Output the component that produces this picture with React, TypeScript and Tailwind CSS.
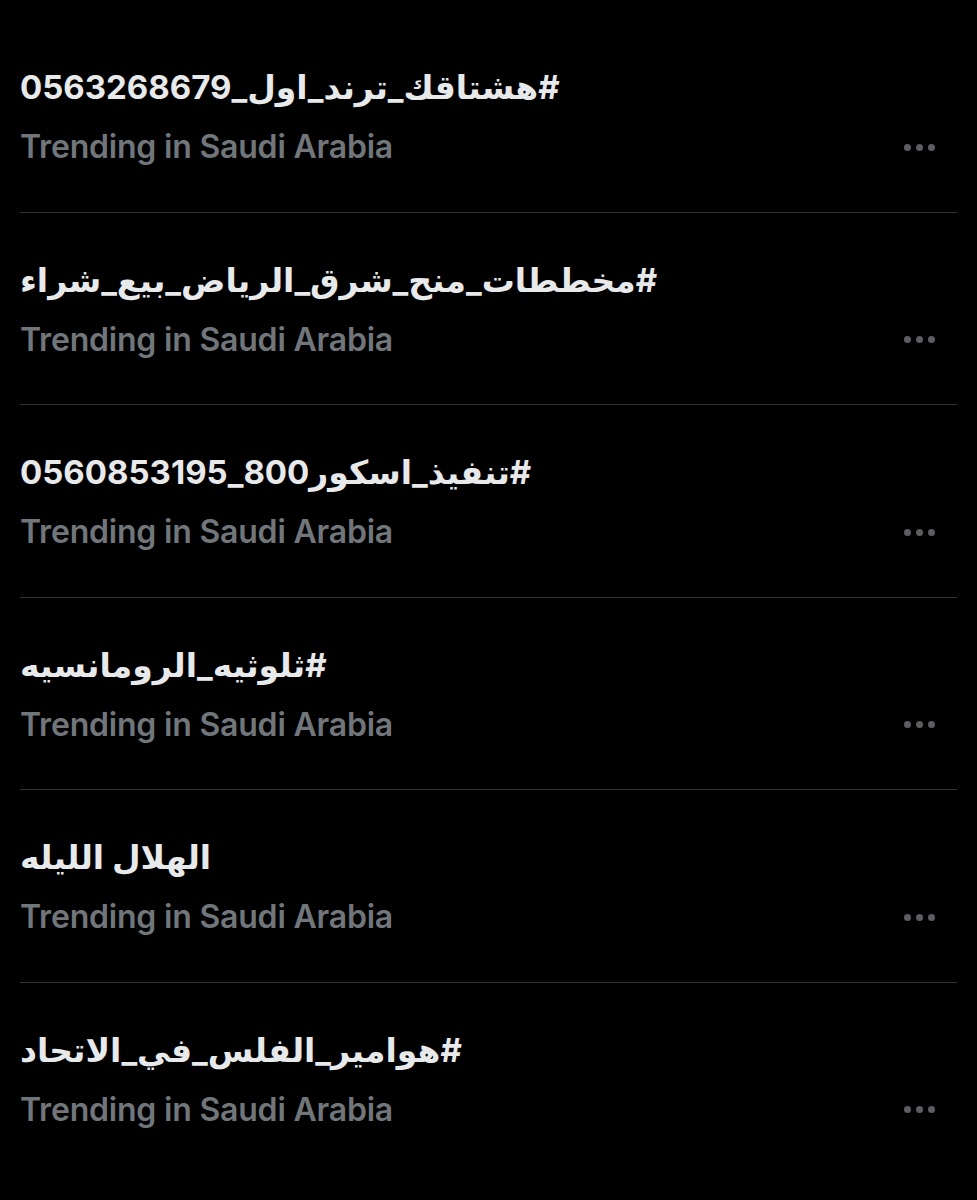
const trends = [
  "#هشتاقك_ترند_اول_0563268679",
  "#مخططات_منح_شرق_الرياض_بيع_شراء",
  "#تنفيذ_اسكور800_0560853195",
  "#ثلوثيه_الرومانسيه",
  "الهلال الليله",
  "#هوامير_الفلس_في_الاتحاد",
];

function Dots() {
  return (
    <div className="flex items-center gap-[5px]">
      <span className="w-[7px] h-[7px] rounded-full bg-[#5b5f63]" />
      <span className="w-[7px] h-[7px] rounded-full bg-[#5b5f63]" />
      <span className="w-[7px] h-[7px] rounded-full bg-[#5b5f63]" />
    </div>
  );
}

export default function App() {
  return (
    <div
      className="w-[977px] h-[1200px] bg-black overflow-hidden pl-[20px] pr-[20px] pt-[20px]"
      style={{ fontFamily: 'Inter, "DejaVu Sans", sans-serif' }}
    >
      {trends.map((t, i) => (
        <div
          key={i}
          className={`h-[192.5px] pt-[45px] ${i < trends.length - 1 ? "border-b border-[#2f3336]" : ""}`}
        >
          <p dir="auto" className="text-left text-[33px] leading-[44px] font-bold text-[#e7e9ea]">
            {t}
          </p>
          <div className="flex items-center justify-between mt-[19px] pr-[22px]">
            <p className="text-[32px] leading-[38px] font-semibold text-[#71767b] tracking-[-0.2px]">
              Trending in Saudi Arabia
            </p>
            <Dots />
          </div>
        </div>
      ))}
    </div>
  );
}
